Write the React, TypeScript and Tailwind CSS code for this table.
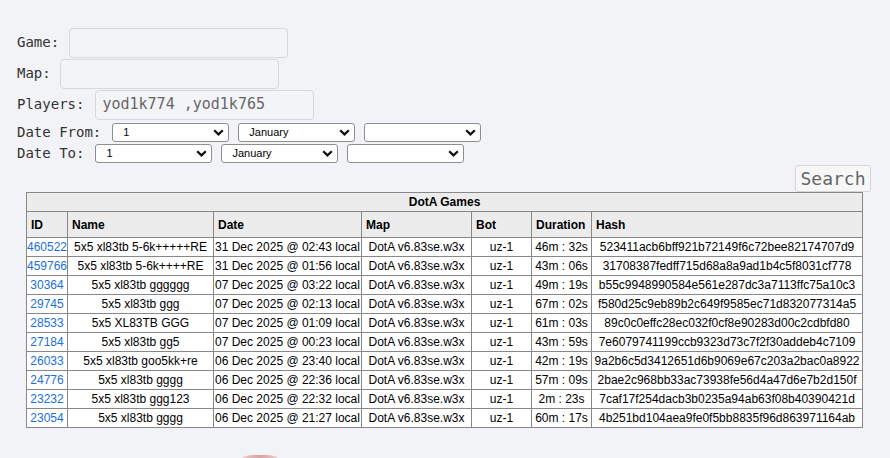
import React from "react";

const games = [
  { id: "460522", name: "5x5 xl83tb 5-6k+++++RE", date: "31 Dec 2025 @ 02:43 local", dur: "46m : 32s", hash: "523411acb6bff921b72149f6c72bee82174707d9" },
  { id: "459766", name: "5x5 xl83tb 5-6k++++RE", date: "31 Dec 2025 @ 01:56 local", dur: "43m : 06s", hash: "31708387fedff715d68a8a9ad1b4c5f8031cf778" },
  { id: "30364", name: "5x5 xl83tb gggggg", date: "07 Dec 2025 @ 03:22 local", dur: "49m : 19s", hash: "b55c9948990584e561e287dc3a7113ffc75a10c3" },
  { id: "29745", name: "5x5 xl83tb ggg", date: "07 Dec 2025 @ 02:13 local", dur: "67m : 02s", hash: "f580d25c9eb89b2c649f9585ec71d832077314a5" },
  { id: "28533", name: "5x5 XL83TB GGG", date: "07 Dec 2025 @ 01:09 local", dur: "61m : 03s", hash: "89c0c0effc28ec032f0cf8e90283d00c2cdbfd80" },
  { id: "27184", name: "5x5 xl83tb gg5", date: "07 Dec 2025 @ 00:23 local", dur: "43m : 59s", hash: "7e6079741199ccb9323d73c7f2f30addeb4c7109" },
  { id: "26033", name: "5x5 xl83tb goo5kk+re", date: "06 Dec 2025 @ 23:40 local", dur: "42m : 19s", hash: "9a2b6c5d3412651d6b9069e67c203a2bac0a8922" },
  { id: "24776", name: "5x5 xl83tb gggg", date: "06 Dec 2025 @ 22:36 local", dur: "57m : 09s", hash: "2bae2c968bb33ac73938fe56d4a47d6e7b2d150f" },
  { id: "23232", name: "5x5 xl83tb ggg123", date: "06 Dec 2025 @ 22:32 local", dur: "2m : 23s", hash: "7caf17f254dacb3b0235a94ab63f08b40390421d" },
  { id: "23054", name: "5x5 xl83tb gggg", date: "06 Dec 2025 @ 21:27 local", dur: "60m : 17s", hash: "4b251bd104aea9fe0f5bb8835f96d863971164ab" },
];

const mono = { fontFamily: '"DejaVu Sans Mono", monospace' };

function Chevron() {
  return (
    <svg width="11" height="7" viewBox="0 0 11 7" className="shrink-0">
      <path d="M1.2 1.2 L5.5 5.4 L9.8 1.2" fill="none" stroke="#111" strokeWidth="2.2" />
    </svg>
  );
}

function FakeSelect({ value }: { value: string }) {
  return (
    <div className="flex items-center justify-between w-[117px] h-[19px] bg-white border border-[#8f8f8f] rounded-[3px] pl-[10px] pr-[4px] text-[11px] text-black" style={{ fontFamily: '"Liberation Sans", Arial, sans-serif' }}>
      <span>{value}</span>
      <Chevron />
    </div>
  );
}

export default function App() {
  return (
    <div className="h-screen overflow-hidden bg-[#f2f3f7] pt-[27px]">
      <div className="pl-[17px] text-[14px] text-[#333]" style={mono}>
        <div className="flex items-center h-[31px]">
          <span>Game:</span>
          <div className="ml-[10px] w-[219px] h-[30px] border border-[#d8d8d8] rounded-[4px] bg-[#f3f4f7]" />
        </div>
        <div className="flex items-center h-[31px]">
          <span>Map:</span>
          <div className="ml-[9px] w-[219px] h-[30px] border border-[#d8d8d8] rounded-[4px] bg-[#f3f4f7]" />
        </div>
        <div className="flex items-center h-[31px]">
          <span>Players:</span>
          <div className="ml-[11px] w-[219px] h-[30px] border border-[#d8d8d8] rounded-[4px] bg-[#f3f4f7] flex items-center pl-[6px] text-[15px] text-[#666]">
            yod1k774 ,yod1k765
          </div>
        </div>
        <div className="flex items-center h-[22px] mt-[1px]">
          <span>Date From:</span>
          <div className="ml-[11px] flex gap-[9px]">
            <FakeSelect value="1" />
            <FakeSelect value="January" />
            <FakeSelect value="" />
          </div>
        </div>
        <div className="flex items-center h-[21px]">
          <span>Date To:</span>
          <div className="ml-[11px] flex gap-[9px]">
            <FakeSelect value="1" />
            <FakeSelect value="January" />
            <FakeSelect value="" />
          </div>
        </div>
      </div>

      <div className="flex justify-end pr-[19px] mt-[1px]">
        <button className="w-[76px] h-[27px] border border-[#d6d6d6] rounded-[3px] bg-[#f7f7f7] text-[18px] text-[#666] leading-none" style={mono}>
          Search
        </button>
      </div>

      <div className="pl-[26px]" style={{ fontFamily: '"Liberation Sans", Arial, sans-serif' }}>
        <table className="table-fixed border-collapse w-[836px] text-[12px] text-black bg-white">
          <colgroup>
            <col className="w-[41px]" />
            <col className="w-[146px]" />
            <col className="w-[148px]" />
            <col className="w-[110px]" />
            <col className="w-[60px]" />
            <col className="w-[60px]" />
            <col className="w-[271px]" />
          </colgroup>
          <thead>
            <tr className="h-[19px] bg-[#ececec]">
              <th colSpan={7} className="border border-[#888] font-bold text-center">DotA Games</th>
            </tr>
            <tr className="h-[26px] bg-[#ececec]">
              {["ID", "Name", "Date", "Map", "Bot", "Duration", "Hash"].map((h) => (
                <th key={h} className="border border-[#888] font-bold text-left pl-[4px] whitespace-nowrap">{h}</th>
              ))}
            </tr>
          </thead>
          <tbody>
            {games.map((g) => (
              <tr key={g.id} className="h-[19px]">
                <td className="border border-[#888] text-center whitespace-nowrap overflow-hidden">
                  <a className="text-[#1a6fd8]">{g.id}</a>
                </td>
                <td className="border border-[#888] text-center whitespace-nowrap overflow-hidden">{g.name}</td>
                <td className="border border-[#888] text-left pl-[1px] whitespace-nowrap overflow-hidden">{g.date}</td>
                <td className="border border-[#888] text-center whitespace-nowrap overflow-hidden">DotA v6.83se.w3x</td>
                <td className="border border-[#888] text-center whitespace-nowrap">uz-1</td>
                <td className="border border-[#888] text-center whitespace-nowrap overflow-hidden">{g.dur}</td>
                <td className="border border-[#888] text-center whitespace-nowrap overflow-hidden">{g.hash}</td>
              </tr>
            ))}
          </tbody>
        </table>
      </div>

      <div className="flex pl-[232px] mt-[27px]">
        <div className="w-[56px] h-[40px] rounded-full bg-[radial-gradient(ellipse_at_top,#d9a0a0,#ecd6d6_55%,#f2f3f7_80%)]" />
      </div>
    </div>
  );
}
